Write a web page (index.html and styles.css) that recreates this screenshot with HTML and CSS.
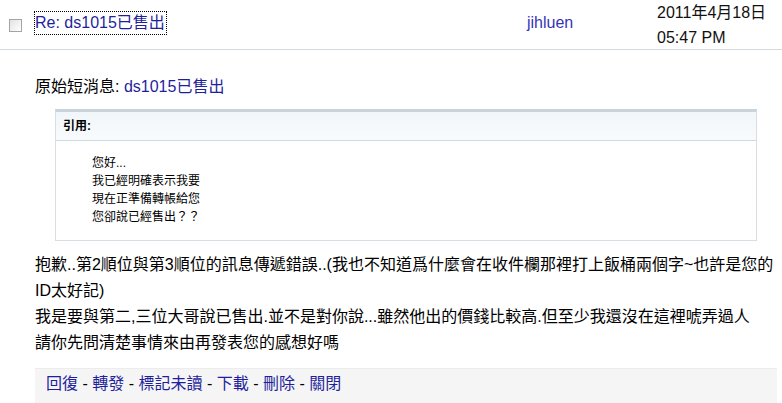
FILE: index.html
```html
<!DOCTYPE html>
<html lang="zh-Hant">
<head>
<meta charset="utf-8">
<title>短消息</title>
<link rel="stylesheet" href="styles.css">
</head>
<body>
<div class="header">
  <div class="col-check"><span class="checkbox"></span></div>
  <div class="col-subject"><a class="subject" href="#">Re: ds1015已售出</a></div>
  <div class="col-author"><a class="author" href="#">jihluen</a></div>
  <div class="col-date">2011年4月18日<br>05:47 PM</div>
</div>
<div class="content">
  <div class="orig">原始短消息: <a class="link" href="#">ds1015已售出</a></div>
  <div class="quote">
    <div class="quote-head">引用:</div>
    <div class="quote-body">您好...<br>我已經明確表示我要<br>現在正準備轉帳給您<br>您卻說已經售出？？</div>
  </div>
  <div class="message">抱歉..第2順位與第3順位的訊息傳遞錯誤..(我也不知道爲什麼會在收件欄那裡打上飯桶兩個字~也許是您的ID太好記)<br>我是要與第二,三位大哥說已售出.並不是對你說...雖然他出的價錢比較高.但至少我還沒在這裡唬弄過人<br>請你先問清楚事情來由再發表您的感想好嗎</div>
  <div class="actions"><a class="link" href="#">回復</a> - <a class="link" href="#">轉發</a> - <a class="link" href="#">標記未讀</a> - <a class="link" href="#">下載</a> - <a class="link" href="#">刪除</a> - <a class="link" href="#">關閉</a></div>
</div>
</body>
</html>
```
FILE: styles.css
```css
html, body {
  margin: 0;
  padding: 0;
  background: #ffffff;
}
body {
  font-family: "Liberation Sans", "Noto Sans CJK TC", sans-serif;
  font-size: 16px;
  color: #000;
  width: 782px;
  overflow: hidden;
}
a { text-decoration: none; }
.header {
  display: grid;
  grid-template-columns: 35px 492px 130px 1fr;
  height: 49px;
  border-bottom: 1px solid #d3dbe1;
}
.col-check {
  padding-left: 9px;
  padding-top: 19px;
}
.checkbox {
  display: block;
  width: 11px;
  height: 11px;
  border: 1px solid #a4a4a4;
  background: linear-gradient(135deg, #e2e2e2, #ffffff);
}
.col-subject {
  padding-top: 12px;
}
.subject {
  display: inline-block;
  color: #1f1f9c;
  line-height: 22px;
  outline: 1px dotted #000;
  outline-offset: 0;
  padding: 0 1px 0 0;
}
.col-author {
  padding-top: 12px;
  line-height: 22px;
}
.author {
  color: #3434b8;
}
.col-date {
  line-height: 25px;
  color: #111;
}
.content {
  padding-left: 35px;
  width: 742px;
}
.orig {
  margin-top: 24px;
  line-height: 26px;
}
.link {
  color: #1f1f9c;
}
.quote {
  margin-top: 9px;
  margin-left: 20px;
  width: 700px;
  border: 1px solid #d6dde3;
  border-top: 3px solid #c9d3dc;
}
.quote-head {
  height: 28px;
  line-height: 28px;
  padding-left: 7px;
  font-size: 12px;
  font-weight: bold;
  background: linear-gradient(#f1f6fa, #f8fbfd);
  border-bottom: 1px solid #cfd8df;
}
.quote-body {
  padding: 13px 0 14px 36px;
  font-size: 12px;
  line-height: 18px;
}
.message {
  margin-top: 11px;
  line-height: 26px;
}
.actions {
  margin-top: 12px;
  background: #f5f5f5;
  border-top: 1px solid #ececec;
  padding: 2px 0 12px 11px;
  line-height: 26px;
}
```
